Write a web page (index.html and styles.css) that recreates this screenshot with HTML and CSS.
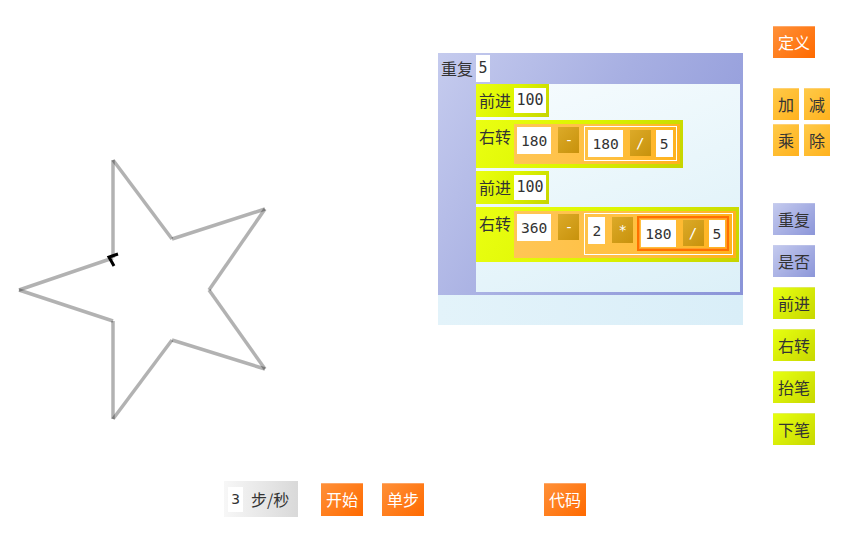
FILE: index.html
```html
<!DOCTYPE html>
<html lang="zh">
<head>
<meta charset="utf-8">
<title>Turtle</title>
<link rel="stylesheet" href="styles.css">
</head>
<body>
<div class="app">
  <div class="top">
    <svg class="stage" width="430" height="470" viewBox="0 0 430 470">
      <g stroke="#000" stroke-opacity="0.3" stroke-width="3.5" fill="none">
        <line x1="113" y1="160" x2="172" y2="239"/>
        <line x1="172" y1="239" x2="265" y2="209"/>
        <line x1="265" y1="209" x2="209" y2="290"/>
        <line x1="209" y1="290" x2="265" y2="369"/>
        <line x1="265" y1="369" x2="172" y2="340"/>
        <line x1="172" y1="340" x2="113" y2="419"/>
        <line x1="113" y1="419" x2="113" y2="321"/>
        <line x1="113" y1="321" x2="19" y2="290"/>
        <line x1="19" y1="290" x2="113" y2="258"/>
        <line x1="113" y1="258" x2="113" y2="160"/>
      </g>
      <polyline points="118,254 109,257 114,266" stroke="#000" stroke-width="3" fill="none"/>
    </svg>

    <div class="editor">
      <div class="repeat">
        <div class="repeat-head"><span class="lbl">重复</span><span class="num">5</span></div>
        <div class="repeat-body">
          <div class="blk"><span class="lbl">前进</span><span class="num">100</span></div>
          <div class="blk">
            <span class="lbl">右转</span>
            <div class="expr">
              <span class="num">180</span><span class="op">-</span>
              <div class="sub">
                <span class="num">180</span><span class="op">/</span><span class="num">5</span>
              </div>
            </div>
          </div>
          <div class="blk"><span class="lbl">前进</span><span class="num">100</span></div>
          <div class="blk">
            <span class="lbl">右转</span>
            <div class="expr">
              <span class="num">360</span><span class="op">-</span>
              <div class="sub">
                <span class="num">2</span><span class="op op-tight">*</span>
                <div class="sub sub-hl">
                  <span class="num">180</span><span class="op">/</span><span class="num">5</span>
                </div>
              </div>
            </div>
          </div>
        </div>
      </div>
      <div class="drop"></div>
    </div>

    <div class="palette">
      <div class="btn btn-orange def">定义</div>
      <div class="ops">
        <div class="btn btn-gold small">加</div>
        <div class="btn btn-gold small">减</div>
        <div class="btn btn-gold small">乘</div>
        <div class="btn btn-gold small">除</div>
      </div>
      <div class="stack">
        <div class="btn btn-purple">重复</div>
        <div class="btn btn-purple">是否</div>
        <div class="btn btn-lime">前进</div>
        <div class="btn btn-lime">右转</div>
        <div class="btn btn-lime">抬笔</div>
        <div class="btn btn-lime">下笔</div>
      </div>
    </div>
  </div>

  <div class="bar">
    <div class="speed"><span class="speed-in">3</span><span class="speed-lbl">步/秒</span></div>
    <div class="btn btn-orange wide start">开始</div>
    <div class="btn btn-orange wide step">单步</div>
    <div class="btn btn-orange wide code">代码</div>
  </div>
</div>
</body>
</html>
```

FILE: styles.css
```css
html, body {
  margin: 0;
  padding: 0;
  background: #fff;
}

body {
  font-family: "Noto Sans CJK SC", "Noto Sans", sans-serif;
  color: #333;
  font-size: 16px;
}

.app {
  width: 845px;
  height: 536px;
  overflow: hidden;
}

.top {
  display: flex;
  height: 470px;
}

.stage {
  display: block;
  flex: none;
}

/* ---------- editor ---------- */
.editor {
  flex: none;
  width: 305px;
  margin-left: 8px;
  padding-top: 53px;
}

.repeat {
  background: linear-gradient(120deg, #c5cbee 0%, #a7afe2 45%, #8a94d8 100%);
  padding: 0 3px 3px 0;
}

.repeat-head {
  display: flex;
  align-items: center;
  gap: 3px;
  height: 31px;
  padding-left: 3px;
}

.repeat-head .num {
  height: 27px;
  line-height: 27px;
}

.repeat-body {
  margin-left: 38px;
  background: linear-gradient(160deg, #f7fcfe 0%, #e9f6fb 50%, #dcf0f8 100%);
  display: flex;
  flex-direction: column;
  align-items: flex-start;
  gap: 3px;
  padding-bottom: 30px;
}

.drop {
  height: 30px;
  background: linear-gradient(90deg, #e3f3fa, #d9eef8);
}

.lbl {
  font-size: 16px;
  line-height: 25px;
  height: 25px;
  white-space: nowrap;
  color: #333;
}

.num {
  display: inline-block;
  background: #fff;
  font-family: "DejaVu Sans Mono", "Liberation Mono", monospace;
  font-size: 15px;
  color: #333;
  height: 25px;
  line-height: 25px;
  padding: 0 2.5px;
  flex: none;
  text-align: center;
}

.blk {
  display: flex;
  align-items: flex-start;
  gap: 3px;
  padding: 4px 3px 4px 3px;
  background: linear-gradient(120deg, #eaff12 0%, #dcf400 50%, #c6d400 100%);
}

.expr {
  display: flex;
  align-items: flex-start;
  padding: 3px;
  background: linear-gradient(100deg, #ffc656 0%, #ffbf3e 60%, #ffb11a 100%);
}

.expr .num {
  height: 27px;
  line-height: 27px;
  font-size: 14.6px;
  padding: 0 4px;
}

.op {
  flex: none;
  width: 21px;
  height: 26px;
  line-height: 26px;
  margin: 0 5px 0 7px;
  text-align: center;
  color: #fff;
  font-family: "DejaVu Sans Mono", "Liberation Mono", monospace;
  font-size: 14px;
  background: linear-gradient(135deg, #dcaa28, #c8920c);
}

.op-tight {
  margin-right: 4px;
}

.sub {
  display: flex;
  align-items: flex-start;
  margin-top: -1px;
  padding: 3px;
  border: 1px solid #fff;
}

.sub-hl {
  border: 2px solid #ff7000;
  padding: 2px;
  box-shadow: inset 0 0 0 1px #ff9d2c;
}

/* ---------- palette ---------- */
.palette {
  flex: none;
  width: 57px;
  margin-left: 30px;
  padding-top: 26px;
  display: flex;
  flex-direction: column;
  align-items: flex-start;
}

.btn {
  box-sizing: border-box;
  width: 42px;
  height: 32px;
  text-align: center;
  font-size: 16px;
  white-space: nowrap;
  border-top: 1px solid rgba(255, 255, 255, 0.35);
  line-height: 30px;
}

.btn.small {
  width: 26px;
}

.btn-orange {
  color: #fff;
  background: linear-gradient(135deg, #ff9038, #ff6a00);
}

.btn-gold {
  color: #333;
  background: linear-gradient(135deg, #ffca48, #ffb21e);
}

.btn-purple {
  color: #333;
  background: linear-gradient(135deg, #c4caee, #8c96d9);
}

.btn-lime {
  color: #333;
  background: linear-gradient(135deg, #e6ff10, #c8d800);
}

.def {
  margin-bottom: 30px;
}

.ops {
  display: grid;
  grid-template-columns: 26px 26px;
  grid-auto-rows: 32px;
  column-gap: 5px;
  row-gap: 4px;
  margin-bottom: 47px;
}

.stack {
  display: flex;
  flex-direction: column;
  gap: 10px;
}

/* ---------- bottom bar ---------- */
.bar {
  display: flex;
  align-items: center;
  height: 36px;
  margin-top: 11px;
  padding-left: 224px;
}

.speed {
  display: flex;
  align-items: center;
  box-sizing: border-box;
  width: 74px;
  height: 36px;
  padding-left: 4px;
  background: linear-gradient(90deg, #f7f7f7, #d9d9d9);
}

.speed-in {
  width: 15px;
  height: 25px;
  line-height: 25px;
  background: #fff;
  text-align: center;
  font-family: "DejaVu Sans Mono", "Liberation Mono", monospace;
  font-size: 14.5px;
  color: #333;
}

.speed-lbl {
  margin-left: 8px;
  font-size: 16px;
  color: #333;
}

.btn.wide {
  height: 33px;
  line-height: 31px;
}

.start {
  margin-left: 23px;
}

.step {
  margin-left: 19px;
}

.code {
  margin-left: 120px;
}
```
